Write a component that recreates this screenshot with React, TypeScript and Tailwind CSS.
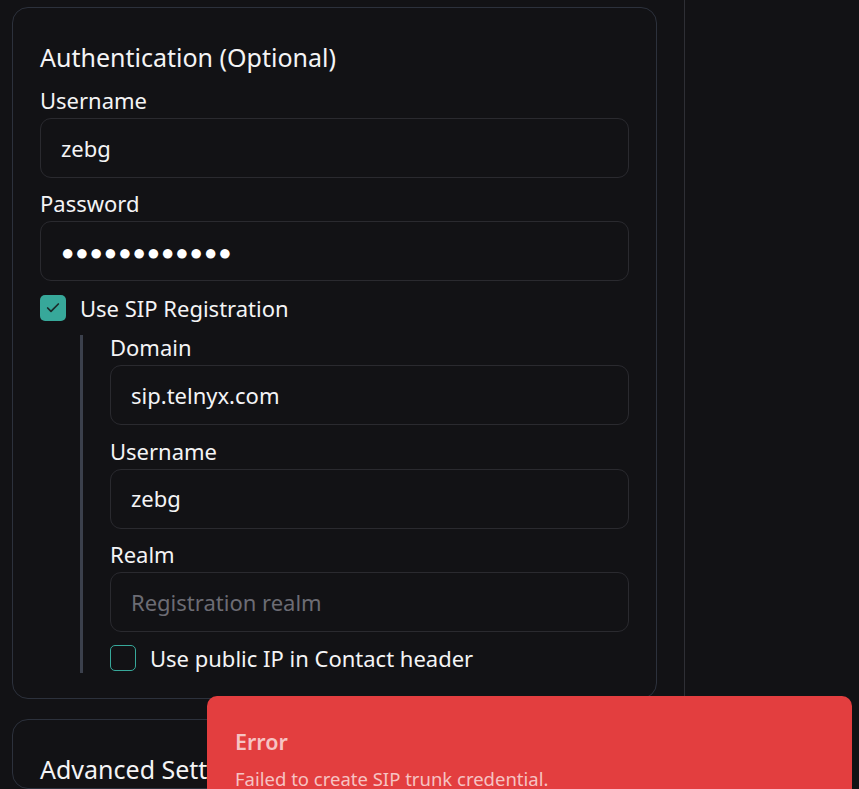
import React from "react";

function Field({ label, value, placeholder, password }: { label: string; value?: string; placeholder?: string; password?: boolean }) {
  return (
    <div className="flex flex-col">
      <label className="mb-[6px] text-[22px] leading-[24px] text-[#f4f4f5]">{label}</label>
      <div className="flex h-[60px] items-center rounded-[11px] border border-[#2a2a2f] bg-[#121215] px-[20px]">
        {value ? (
          <span className={password ? "text-[22px] tracking-[1px] text-white" : "text-[22px] text-[#f4f4f5]"}>{value}</span>
        ) : (
          <span className="text-[22px] text-[#6c6c74]">{placeholder}</span>
        )}
      </div>
    </div>
  );
}

export default function App() {
  return (
    <div
      className="relative h-[789px] w-[859px] overflow-hidden bg-[#121215] text-white"
      style={{ fontFamily: '"Noto Sans", "Open Sans", sans-serif' }}
    >
      <div className="flex h-full">
        <div className="flex w-[684px] flex-col gap-[20px] pl-[12px] pr-[27px] pt-[7px]">
          <div className="rounded-[16px] border border-[#2c313c] px-[27px] pb-[25px] pt-[31px]">
            <h2 className="text-[25px] leading-[36px] text-[#f4f4f5]">Authentication (Optional)</h2>
            <div className="mt-[13px] flex flex-col gap-[13px]">
              <Field label="Username" value="zebg" />
              <Field label="Password" value="●●●●●●●●●●●●" password />
            </div>
            <div className="mt-[12px] flex h-[30px] items-center gap-[14px]">
              <div className="flex h-[26px] w-[26px] items-center justify-center rounded-[5px] bg-[#37a89a]">
                <svg width="16" height="16" viewBox="0 0 24 24" fill="none" stroke="#1b2b2a" strokeWidth="2.6" strokeLinecap="round" strokeLinejoin="round">
                  <path d="M20 6 9 17l-5-5" />
                </svg>
              </div>
              <span className="text-[22px] leading-[30px] text-[#f4f4f5]">Use SIP Registration</span>
            </div>
            <div className="ml-[40px] mt-[12px] flex flex-col gap-[13.5px] border-l-[3px] border-[#3b404c] pl-[27px]">
              <Field label="Domain" value="sip.telnyx.com" />
              <Field label="Username" value="zebg" />
              <Field label="Realm" placeholder="Registration realm" />
              <div className="-mt-[3px] flex h-[30px] items-center gap-[14px]">
                <div className="h-[26px] w-[26px] rounded-[5px] border border-[#37a89a]" />
                <span className="text-[22px] leading-[30px] text-[#f4f4f5]">Use public IP in Contact header</span>
              </div>
            </div>
          </div>
          <div className="h-[200px] rounded-[16px] border border-[#2c313c] px-[27px] pt-[31px]">
            <h2 className="text-[25px] leading-[36px] text-[#f4f4f5]">Advanced Settings</h2>
          </div>
        </div>
        <div className="h-full w-px bg-[#2e2f35]" />
      </div>
      <div className="absolute left-[207px] top-[696px] h-[140px] w-[645px] rounded-[10px] bg-[#e33e3f] px-[28px] pt-[32px]">
        <div className="text-[21.5px] font-semibold leading-[28px] text-[#f6c3c3]">Error</div>
        <div className="mt-[10px] text-[18.5px] leading-[26px] text-[#f6c3c3]">Failed to create SIP trunk credential.</div>
      </div>
    </div>
  );
}
